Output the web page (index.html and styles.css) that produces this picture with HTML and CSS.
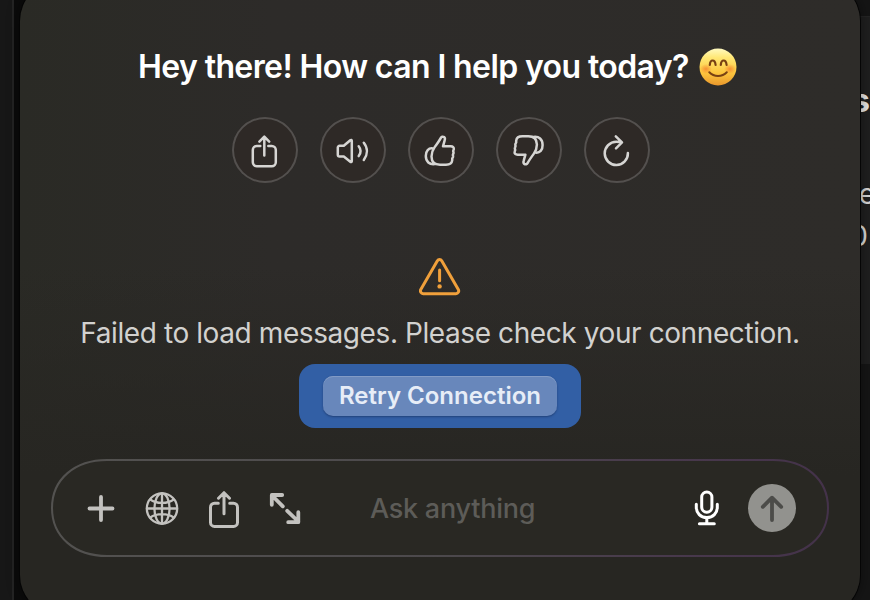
FILE: index.html
```html
<!DOCTYPE html>
<html lang="en">
<head>
<meta charset="utf-8">
<title>Chat</title>
<link rel="stylesheet" href="styles.css">
</head>
<body>
<div class="edge"></div>
<div class="behind">
  <span class="peek peek-title">s</span>
  <span class="peek peek-one">e</span>
  <span class="peek peek-two">0</span>
</div>
<main class="panel">
  <h1 class="greeting"><span class="greeting-text">Hey there! How can I help you today?</span>
    <svg class="emoji" width="38" height="38" viewBox="0 0 38 38">
      <defs>
        <linearGradient id="face" x1="0" y1="0" x2="0" y2="1"><stop offset="0" stop-color="#fffac0"/><stop offset=".25" stop-color="#ffe774"/><stop offset=".65" stop-color="#fdc73e"/><stop offset="1" stop-color="#e9972c"/></linearGradient>
        <radialGradient id="blush"><stop offset="0" stop-color="#f47c2b" stop-opacity=".75"/><stop offset="1" stop-color="#f47c2b" stop-opacity="0"/></radialGradient>
      </defs>
      <circle cx="19" cy="19" r="18.5" fill="url(#face)"/>
      <ellipse cx="7" cy="21" rx="6" ry="5" fill="url(#blush)"/><ellipse cx="31" cy="21" rx="6" ry="5" fill="url(#blush)"/>
      <path d="M10.8 17c.4-6 5.2-6 5.8 0M21.8 17c.4-6 5.2-6 5.8 0" fill="none" stroke="#784113" stroke-width="2.2" stroke-linecap="round"/>
      <path d="M10.3 24.2c4.7 5 12.8 5 17.5 0" fill="none" stroke="#784113" stroke-width="2" stroke-linecap="round"/>
    </svg>
  </h1>
  <div class="actions">
    <button class="round"><svg viewBox="0 0 66 66"><path d="M28.3 28.9h-3.5a4 4 0 0 0-4 4v12.4a4 4 0 0 0 4 4h15a4 4 0 0 0 4-4V32.900a4 4 0 0 0-4-4h-3.500M32.300 38.500V20M27.400 24.600l4.900-4.900 4.900 4.900"/></svg></button>
    <button class="round"><svg viewBox="0 0 66 66"><path d="M31.8 23.8v20.4c0 1-.8 1.1-1.5.5l-6.5-5.2h-4.2a1.8 1.8 0 0 1-1.8-1.8v-7.1a1.800 1.800 0 0 1 1.800-1.800h4.200l6.500-5.500c.700-.600 1.500-.400 1.500.500zM38.700 29.300c2.300 3 2.300 6.800 0 9.800M43.800 25.800c4.100 5.100 4.100 11.800 0 17.200"/></svg></button>
    <button class="round"><svg viewBox="0 0 66 66"><path d="M35 29.300h7.800c2.100 0 3.300 1.100 3 2.800-.1.900-.6 1.300-.6 1.800 0 .7.500 1 .3 2.100-.1.900-.6 1.200-.6 1.900s.3 1.100.1 2.100c-.2.800-.8 1.100-.8 1.700s.1 1 0 1.700c-.4 3.600-2.800 4.300-6.200 4.300h-6c-5.500 0-8.400-3.200-8.500-8.200 0-3 .8-6 3-9.100 2.700-3.700 5-7 6.200-9.300.7-1.400 2.200-1.900 3.400-1 1.100.8 1 2.100.5 3.500zM24.800 31.400c-4.200-.600-7.100 2.500-7 7.700.1 5.600 3.600 8.700 9 8"/></svg></button>
    <button class="round"><svg viewBox="0 0 66 66"><path transform="rotate(180 32.200 33.500)" d="M35 29.300h7.800c2.100 0 3.300 1.100 3 2.800-.1.900-.6 1.300-.6 1.800 0 .7.500 1 .3 2.100-.1.900-.6 1.200-.6 1.900s.3 1.100.1 2.100c-.2.800-.8 1.100-.8 1.700s.1 1 0 1.700c-.4 3.600-2.800 4.300-6.200 4.300h-6c-5.500 0-8.400-3.200-8.500-8.200 0-3 .8-6 3-9.100 2.700-3.700 5-7 6.200-9.300.7-1.400 2.200-1.900 3.400-1 1.100.8 1 2.100.5 3.500zM24.800 31.400c-4.200-.600-7.100 2.500-7 7.700.1 5.600 3.600 8.700 9 8"/></svg></button>
    <button class="round"><svg viewBox="0 0 66 66"><path d="M43.900 36a11.600 11.600 0 1 1-11.600-11.200c2 0 3.800.200 5.300.700M31.800 19.300l6.200 6.100-6 6"/></svg></button>
  </div>
  <section class="error">
    <svg class="warning" width="42" height="38" viewBox="0 0 42 38"><path d="M18.400 2.800a2.500 2.500 0 0 1 4.300 0L39.300 31.500a2.800 2.800 0 0 1-2.400 4.200H4.200a2.800 2.800 0 0 1-2.400-4.200z"/><path d="M20.600 12v10.800"/><circle cx="20.600" cy="28.400" r="2.200"/></svg>
    <p class="message">Failed to load messages. Please check your connection.</p>
    <div class="retry"><button class="retry-button">Retry Connection</button></div>
  </section>
  <div class="composer">
    <svg class="outline" viewBox="0 0 778 98"><defs><linearGradient id="rim" x1="0" x2="1" y1="0" y2="0"><stop offset="0" stop-color="#535250"/><stop offset=".5" stop-color="#4c494c"/><stop offset=".8" stop-color="#48394c"/><stop offset="1" stop-color="#44324a"/></linearGradient></defs><path fill="#292823" stroke="url(#rim)" stroke-width="2" d="M56 1H722C754 1 777 20 777 49S754 97 722 97H56C24 97 1 78 1 49S24 1 56 1z"/></svg>
    <div class="tools">
      <svg class="tool" width="28" height="40" viewBox="0 0 28 40"><path stroke-width="3.800" d="M2.500 20.500h23M14 9v23"/></svg>
      <svg class="tool" width="34" height="40" viewBox="0 0 34 40"><g stroke-width="2.300"><circle cx="17" cy="20.500" r="15.200"/><ellipse cx="17" cy="20.500" rx="7.600" ry="15.200"/><path d="M17 5.500v30M2 20.500h30M5.300 11.500c6 4.500 17.400 4.500 23.400 0M5.300 29.500c6-4.500 17.400-4.500 23.400 0"/></g></svg>
      <svg class="tool" width="30" height="40" viewBox="0 0 30 40"><path stroke-width="3" d="M9.300 15.200H5.500a4 4 0 0 0-4 4v15.200a4 4 0 0 0 4 4h19a4 4 0 0 0 4-4V19.200a4 4 0 0 0-4-4h-3.800M15 25.800V4.700M9.500 10.200 15 4.700l5.500 5.500"/></svg>
      <svg class="tool" width="32" height="40" viewBox="0 0 32 40"><path stroke-width="3.800" d="M13.800 18.300 3 7.500M2.800 16.800V7h10.400M18.200 22.800 29.300 33.500M29.300 24.200v10H19.200"/></svg>
    </div>
    <span class="placeholder">Ask anything</span>
    <svg class="mic" width="26" height="36" viewBox="0 0 26 36"><rect x="7.700" y="2" width="10.200" height="20.200" rx="5.100"/><path d="M2.300 14.200v3c0 6 4.300 10.400 10.500 10.400s10.500-4.400 10.500-10.400v-3M12.800 28v5M5.400 33.800h14.900"/></svg>
    <button class="send"><svg viewBox="0 0 48 48"><path d="M24 36V14M14.800 22.800 24 13.700l9.200 9.100"/></svg></button>
  </div>
</main>
</body>
</html>
```
FILE: styles.css
```css
* { box-sizing: border-box; }
body {
  margin: 0;
  height: 600px;
  overflow: hidden;
  position: relative;
  display: flow-root;
  background: #151515;
  font-family: Inter, "Liberation Sans", sans-serif;
}
button { padding: 0; border: 0; font: inherit; }
svg { display: block; fill: none; stroke-linecap: round; stroke-linejoin: round; }

/* windows lying behind the panel */
.edge {
  position: absolute;
  left: 0; top: 0;
  width: 40px; height: 600px;
  background: linear-gradient(90deg, #171717 0 12px, #242424 12px 14px, #0b0b0b 14px);
}
.behind {
  position: absolute;
  left: 840px; top: 16px;
  width: 30px; height: 348px;
  background: #1f1f1f;
  border-top: 1px solid #252525;
  overflow: hidden;
}
.peek { position: absolute; color: #d8d8d8; line-height: 1; }
.peek-title { right: 0; top: 67px; font-size: 33px; font-weight: 700; color: #e6e6e6; }
.peek-one { right: -5px; top: 163px; font-size: 28px; }
.peek-two { right: 2px; top: 205px; font-size: 28px; }

.panel {
  position: relative;
  width: 840px; height: 634px;
  margin: -19px 0 0 20px;
  padding: 66px 31px 0;
  border-radius: 40px;
  background: linear-gradient(180deg, rgba(38,37,33,0) 45%, #272622 78%), linear-gradient(90deg, #2a2a25, #2d2b29 30%, #2e2c29);
  box-shadow: 0 0 0 1px #050505, 0 0 14px rgba(0,0,0,.45);
  display: flex;
  flex-direction: column;
  align-items: center;
}
.greeting {
  display: flex;
  align-items: center;
  gap: 10px;
  align-self: flex-start;
  margin: 0 0 0 87px;
  height: 40px;
  color: #fff;
  font-size: 32px;
  font-weight: 600;
  line-height: 40px;
  white-space: nowrap;
}
.greeting-text { width: 551px; letter-spacing: -.61px; }
.emoji { flex: none; }
.actions { display: flex; gap: 22px; margin: 30px 0 0 2px; }
.round {
  width: 66px; height: 66px;
  border-radius: 50%;
  background: #2e2926;
  box-shadow: inset 0 0 0 2px #53504e;
}
.round path { stroke: #d6d5d3; stroke-width: 2.5; }
.error { display: flex; flex-direction: column; align-items: center; margin-top: 75px; }
.warning { margin-left: 1px; }
.warning path { stroke: #f0a03b; stroke-width: 3; }
.warning circle { fill: #f0a03b; }
.message {
  margin: 19px 0 0;
  color: #d2d1cf;
  font-size: 28px;
  letter-spacing: -.41px;
  line-height: 36px;
  white-space: nowrap;
}
.retry {
  display: flex;
  align-items: center;
  justify-content: center;
  width: 282px; height: 64px;
  margin-top: 13px;
  border-radius: 16px;
  background: #325fa5;
}
.retry-button {
  width: 234px; height: 40px;
  border-radius: 10px;
  background: #6887bb;
  box-shadow: inset 0 1px 0 #829bc6, 0 1px 2px rgba(15,35,80,.5);
  color: #e7edf7;
  font-size: 24px;
  font-weight: 600;
  line-height: 40px;
  white-space: nowrap;
}
.composer {
  position: relative;
  flex: none;
  display: flex;
  align-items: center;
  width: 778px; height: 98px;
  margin-top: 31px;
  padding: 0 33px 0 36px;
}
.outline { position: absolute; inset: 0; }
.tools { position: relative; display: flex; align-items: center; gap: 30px; }
.tool { stroke: #c3c2bf; }
.placeholder {
  position: relative;
  width: 168px;
  margin-left: 69px;
  padding-top: 2px;
  color: #5d5c58;
  font-size: 27px;
  letter-spacing: -.25px;
  font-weight: 500;
  line-height: 36px;
  white-space: nowrap;
}
.mic { position: relative; margin-left: auto; stroke: #fff; stroke-width: 3; }
.send {
  position: relative;
  width: 48px; height: 48px;
  margin-left: 28px;
  border-radius: 50%;
  background: #92928e;
}
.send path { stroke: #4c4c49; stroke-width: 3.8; }
```
